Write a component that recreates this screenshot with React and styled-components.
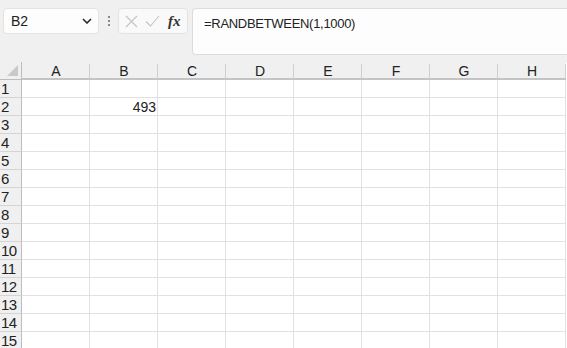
import React from 'react'
import styled, { createGlobalStyle } from 'styled-components'

const Global = createGlobalStyle`
  body {
    margin: 0;
    background: #f0f0f0;
    font-family: "Liberation Sans", Arial, sans-serif;
    overflow: hidden;
  }
`

const Page = styled.div`
  width: 567px;
  height: 348px;
  overflow: hidden;
  background: #f0f0f0;
`

const Toolbar = styled.div`
  height: 62px;
  display: flex;
  align-items: flex-start;
  padding: 8px 0 0 3px;
  box-sizing: border-box;
`

const NameBox = styled.div`
  width: 96px;
  height: 26px;
  box-sizing: border-box;
  background: #fdfdfd;
  border: 1px solid #e3e3e3;
  border-radius: 4px;
  display: flex;
  align-items: center;
  justify-content: space-between;
  padding: 0 6px 0 7px;
  font-size: 14px;
  color: #222;
`

const Grip = styled.div`
  width: 19px;
  height: 26px;
  display: flex;
  flex-direction: column;
  align-items: center;
  justify-content: center;
  gap: 2px;
  span {
    width: 2px;
    height: 2px;
    background: #8a8a8a;
  }
`

const Buttons = styled.div`
  width: 70px;
  height: 26px;
  box-sizing: border-box;
  background: #f9f9f9;
  border: 1px solid #e3e3e3;
  border-radius: 4px;
  display: flex;
  align-items: center;
  padding: 0 4px 0 6px;
  gap: 7px;
`

const Fx = styled.span`
  font-family: "Liberation Serif", serif;
  font-style: italic;
  font-weight: bold;
  font-size: 15px;
  color: #333;
  margin-left: 1px;
`

const Formula = styled.div`
  margin-left: 4px;
  flex: 1;
  height: 47px;
  box-sizing: border-box;
  background: #fdfdfd;
  border: 1px solid #dcdcdc;
  border-right: none;
  border-radius: 4px 0 0 4px;
  padding: 7px 0 0 11px;
  font-size: 13px;
  letter-spacing: -0.3px;
  color: #222;
`

const Grid = styled.div`
  display: grid;
  grid-template-columns: 22px repeat(8, 68px);
  grid-auto-rows: 18px;
  background: #fff;
`

const Corner = styled.div`
  background: #f0f0f0;
  border-right: 1px solid #bdbdbd;
  border-bottom: 1px solid #bdbdbd;
  box-sizing: border-box;
  display: flex;
  align-items: flex-end;
  justify-content: flex-end;
  padding: 0 3px 3px 0;
`

const ColHead = styled.div`
  background: #f0f0f0;
  border-bottom: 2px solid #c4c4c4;
  box-sizing: border-box;
  position: relative;
  display: flex;
  align-items: center;
  justify-content: center;
  font-size: 14px;
  color: #222;
  padding-top: 2px;
  &::after {
    content: '';
    position: absolute;
    right: 0;
    top: 2px;
    bottom: 0;
    width: 1px;
    background: #cfcfcf;
  }
`

const RowHead = styled.div`
  background: #f0f0f0;
  border-right: 1px solid #bdbdbd;
  border-bottom: 1px solid #d4d4d4;
  box-sizing: border-box;
  font-size: 15px;
  line-height: 18px;
  color: #222;
  padding-left: 1px;
  letter-spacing: -0.5px;
`

const Cell = styled.div`
  border-right: 1px solid #e1e1e1;
  border-bottom: 1px solid #e1e1e1;
  box-sizing: border-box;
  font-size: 14px;
  line-height: 18px;
  text-align: ${p => (p.$num ? 'right' : 'left')};
  padding-right: 1px;
  color: #222;
`

const cols = ['A', 'B', 'C', 'D', 'E', 'F', 'G', 'H']
const rows = Array.from({ length: 15 }, (_, i) => i + 1)

export default function App() {
  return (
    <Page>
      <Global />
      <Toolbar>
        <NameBox>
          B2
          <svg width="10" height="6" viewBox="0 0 10 6">
            <path d="M1 1l4 4 4-4" fill="none" stroke="#222" strokeWidth="1.5" />
          </svg>
        </NameBox>
        <Grip>
          <span />
          <span />
          <span />
        </Grip>
        <Buttons>
          <svg width="13" height="13" viewBox="0 0 13 13">
            <path d="M1 1l11 11M12 1L1 12" stroke="#c4c4c4" strokeWidth="1.1" />
          </svg>
          <svg width="15" height="12" viewBox="0 0 15 12">
            <path d="M1 6.5l4.5 4.5L14 1" fill="none" stroke="#c4c4c4" strokeWidth="1.1" />
          </svg>
          <Fx>fx</Fx>
        </Buttons>
        <Formula>=RANDBETWEEN(1,1000)</Formula>
      </Toolbar>
      <Grid>
        <Corner>
          <svg width="11" height="11" viewBox="0 0 11 11">
            <path d="M11 0V11H0Z" fill="#c9c9c9" />
          </svg>
        </Corner>
        {cols.map(c => (
          <ColHead key={c}>{c}</ColHead>
        ))}
        {rows.map(r => (
          <React.Fragment key={r}>
            <RowHead>{r}</RowHead>
            {cols.map(c => (
              <Cell key={c} $num={r === 2 && c === 'B'}>
                {r === 2 && c === 'B' ? '493' : ''}
              </Cell>
            ))}
          </React.Fragment>
        ))}
      </Grid>
    </Page>
  )
}
